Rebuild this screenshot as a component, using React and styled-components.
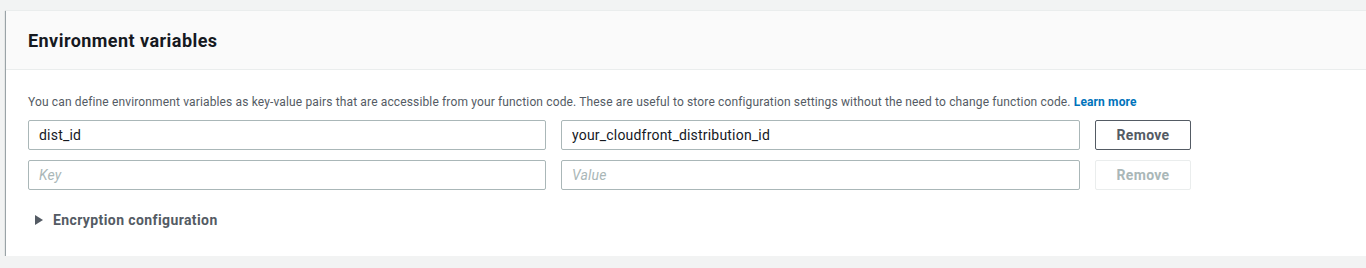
import React from 'react';
import styled, { createGlobalStyle } from 'styled-components';

const GlobalStyle = createGlobalStyle`
  html, body {
    margin: 0;
    background: #f2f3f3;
    overflow: hidden;
  }
  body {
    font-family: Roboto, "Noto Sans", "Liberation Sans", sans-serif;
    padding: 10px 0 0 6px;
  }
`;

const Panel = styled.section`
  width: 1400px;
  background: #fff;
  border-top: 1px solid #eaeded;
  box-shadow: 0 1px 1px 0 rgba(0, 28, 36, 0.5), 1px 1px 1px 0 rgba(0, 28, 36, 0.3),
    -1px 1px 1px 0 rgba(0, 28, 36, 0.3);
`;

const Header = styled.header`
  background: #fafafa;
  border-bottom: 1px solid #eaeded;
  height: 58px;
  display: flex;
  align-items: center;
  padding: 0 22px;
`;

const Title = styled.h2`
  margin: 0;
  font-size: 18px;
  font-weight: 700;
  letter-spacing: 0.45px;
  color: #16191f;
`;

const Body = styled.div`
  padding: 24px 22px 26px;
`;

const Description = styled.p`
  margin: 0 0 10px;
  font-size: 12px;
  line-height: 16px;
  letter-spacing: 0.14px;
  color: #545b64;
`;

const LearnMore = styled.a`
  color: #0073bb;
  font-weight: 700;
  text-decoration: none;
`;

const Rows = styled.div`
  display: flex;
  flex-direction: column;
  gap: 10px;
`;

const Row = styled.div`
  display: grid;
  grid-template-columns: 518px 519px 96px;
  column-gap: 15px;
`;

const Input = styled.input`
  box-sizing: border-box;
  height: 30px;
  border: 1px solid #aab7b8;
  border-radius: 2px;
  padding: 0 10px;
  font-family: inherit;
  font-size: 14px;
  letter-spacing: 0.2px;
  color: #16191f;
  outline: none;

  &::placeholder {
    color: #aab7b8;
    font-style: italic;
  }
`;

const RemoveButton = styled.button`
  box-sizing: border-box;
  height: 30px;
  border: 1px solid ${(p) => (p.disabled ? '#eaeded' : '#545b64')};
  border-radius: 2px;
  background: #fff;
  font-family: inherit;
  font-size: 14px;
  font-weight: 700;
  letter-spacing: 0.3px;
  color: ${(p) => (p.disabled ? '#aab7b8' : '#545b64')};
  cursor: ${(p) => (p.disabled ? 'default' : 'pointer')};
`;

const Expander = styled.div`
  margin-top: 20px;
  display: flex;
  align-items: center;
  gap: 10px;
  padding-left: 7px;
  font-size: 14px;
  line-height: 20px;
  font-weight: 700;
  letter-spacing: 0.4px;
  color: #545b64;
`;

const Caret = styled.span`
  width: 0;
  height: 0;
  border-top: 5px solid transparent;
  border-bottom: 5px solid transparent;
  border-left: 8px solid #545b64;
`;

const vars = [
  { key: 'dist_id', value: 'your_cloudfront_distribution_id' },
  { key: '', value: '', empty: true },
];

export default function App() {
  return (
    <>
      <GlobalStyle />
      <Panel>
        <Header>
          <Title>Environment variables</Title>
        </Header>
        <Body>
          <Description>
            You can define environment variables as key-value pairs that are accessible from your function code. These are useful to store configuration settings without the need to change function code.{' '}
            <LearnMore href="#">Learn more</LearnMore>
          </Description>
          <Rows>
            {vars.map((v, i) => (
              <Row key={i}>
                <Input defaultValue={v.key} placeholder="Key" />
                <Input defaultValue={v.value} placeholder="Value" />
                <RemoveButton disabled={v.empty}>Remove</RemoveButton>
              </Row>
            ))}
          </Rows>
          <Expander>
            <Caret />
            Encryption configuration
          </Expander>
        </Body>
      </Panel>
    </>
  );
}
